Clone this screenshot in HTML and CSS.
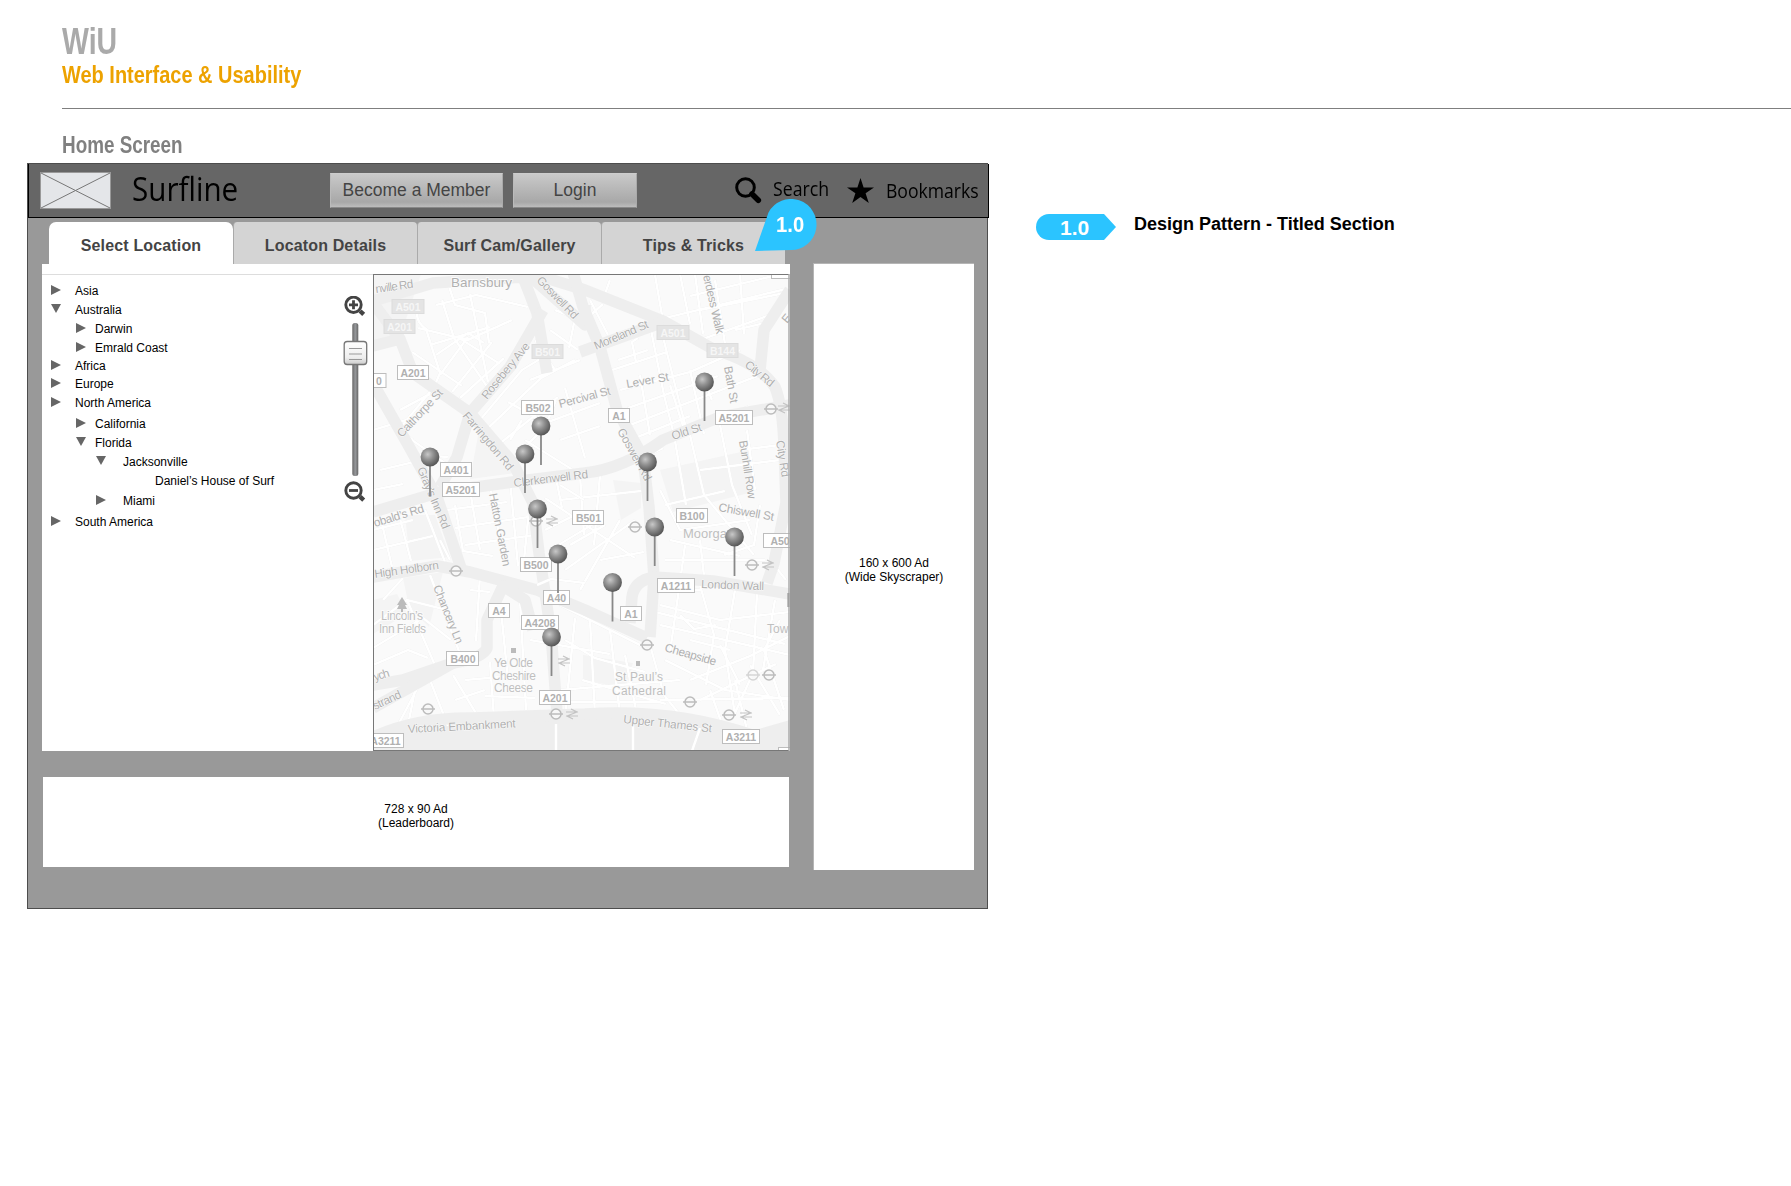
FILE: index.html
```html
<!DOCTYPE html>
<html lang="en">
<head>
<meta charset="utf-8">
<title>WiU - Home Screen</title>
<link rel="stylesheet" href="styles.css">
</head>
<body>
<header class="doc-head">
  <h1 class="doc-title"><span>WiU</span></h1>
  <p class="doc-sub"><span>Web Interface &amp; Usability</span></p>
</header>
<h2 class="screen-name"><span>Home Screen</span></h2>
<div class="board">
  <div class="frame">
    <div class="topbar">
      <svg class="logo" width="71" height="37" viewBox="0 0 71 37"><rect x=".5" y=".5" width="70" height="36" fill="#e4e6e9" stroke="#999"/><path d="M1 1 70 36M70 1 1 36" stroke="#777" stroke-width="1"/></svg>
      <span class="brand"><span>Surfline</span></span>
      <button class="btn btn-member">Become a Member</button>
      <button class="btn btn-login">Login</button>
      <svg class="ico-search" width="27" height="27" viewBox="0 0 27 27"><circle cx="10.5" cy="10.5" r="8.8" fill="none" stroke="#000" stroke-width="3"/><path d="M17 17l6.3 6.2" stroke="#000" stroke-width="5.6" stroke-linecap="round"/></svg>
      <span class="link link-search"><span>Search</span></span>
      <svg class="ico-star" width="27" height="25" viewBox="0 0 27 25"><path d="M13.5 0l3.1 9.4H27l-8.4 5.8 3.2 9.8-8.3-6.1L5.2 25l3.2-9.8L0 9.4h10.4z"/></svg>
      <span class="link link-book"><span>Bookmarks</span></span>
    </div>
    <div class="content">
      <div class="left">
        <nav class="tabs">
          <a class="tab active">Select Location</a>
          <a class="tab">Locaton Details</a>
          <a class="tab">Surf Cam/Gallery</a>
          <a class="tab">Tips &amp; Tricks</a>
        </nav>
        <section class="panel">
          <div class="locations">
            <ul class="tree">
              <li><i class="shut"></i>Asia</li>
              <li><i class="open"></i>Australia</li>
              <li class="l2"><i class="shut"></i>Darwin</li>
              <li class="l2"><i class="shut"></i>Emrald Coast</li>
              <li class="tight"><i class="shut"></i>Africa</li>
              <li><i class="shut"></i>Europe</li>
              <li class="loose"><i class="shut"></i>North America</li>
              <li class="l2"><i class="shut"></i>California</li>
              <li class="l2"><i class="open"></i>Florida</li>
              <li class="l3"><i class="open"></i>Jacksonville</li>
              <li class="l4">Daniel’s House of Surf</li>
              <li class="l3 last"><i class="shut"></i>Miami</li>
              <li><i class="shut"></i>South America</li>
            </ul>
            <svg class="zoomer" width="26" height="208" viewBox="343 296 26 208">
              <defs>
                <linearGradient id="track"><stop offset="0" stop-color="#666"/><stop offset=".5" stop-color="#96989b"/><stop offset="1" stop-color="#666"/></linearGradient>
                <linearGradient id="knob" x2="0" y2="1"><stop offset="0" stop-color="#fff"/><stop offset=".7" stop-color="#eee"/><stop offset="1" stop-color="#ccc"/></linearGradient>
              </defs>
              <g fill="none" stroke="#444">
                <circle cx="353.500" cy="304.800" r="7.700" stroke-width="2.900"/><path d="M360 311l3.700 3.400" stroke-width="4.400"/><path d="M349 304.800h9M353.500 300.300v9" stroke-width="2.800"/>
                <circle cx="353.500" cy="490.500" r="7.700" stroke-width="2.900"/><path d="M360 496.700l3.700 3.400" stroke-width="4.400"/><path d="M349 490.500h9" stroke-width="2.800"/>
              </g>
              <rect x="352.300" y="323" width="6" height="153" rx="2.500" fill="url(#track)"/>
              <rect x="344.200" y="341.500" width="22.500" height="23" rx="3" fill="url(#knob)" stroke="#777" stroke-width="1.300"/>
              <path d="M349 348.500h13M349 354h13M349 359.500h13" stroke="#999" stroke-width="1.100"/>
            </svg>
          </div>
          <svg class="map" width="417" height="477" viewBox="373 274 417 477">
            <defs>
              <radialGradient id="ball" cx=".38" cy=".36" r=".65"><stop offset="0" stop-color="#c8c8c8"/><stop offset=".45" stop-color="#929292"/><stop offset="1" stop-color="#585858"/></radialGradient>
              <g id="pin"><path d="M0 8v31" stroke="#888" stroke-width="1.800"/><circle r="9.400" fill="url(#ball)"/></g>
              <g id="tube" fill="none" stroke="#bcbcbc"><circle r="5" fill="#f8f8f8" stroke-width="1.500"/><path d="M-7 0H7" stroke-width="1.500"/></g>
              <path id="rail" d="M-6-2H6M-6 2H6M-1-5 5-2-5 2 1 5" fill="none" stroke="#c4c4c4" stroke-width="1.200"/>
            </defs>
            <rect x="373" y="274" width="417" height="477" fill="#fafafa"/>
            <g fill="#f4f4f4">
              <path d="M373 274h48l-20 60-28 8zM405 515h30l15 42-40 4zM403 578l40-6-14 55-20-20zM613 480l28 3v25l-20 12zM480 425l35 48-45 6zM373 600l24-6 10 20-34 20zM660 470l90-20 3 42-80 20zM583 655l50 8-8 25-42-8z"/>
            </g>
            <path d="M373 741q40-14 90-21l122-4q90-4 170 14l35-10v31H373z" fill="#eee"/>
            <g class="minor">
              <path d="M436 305l40-10 52 12M442 300l12 38 34 50M418 328l50 12 44-20M430 345l60-18M470 294l18 88M448 283l7 22 30 8 4 30M456 336l44 28M436 355l32-22 16 10M412 352l50 34M440 375l28-38M452 392l40-50M460 398l44-40"/>
              <path d="M420 305q-8 14 6 24l14 44-6 14-33 40M395 426l18 14M400 410l30-16M430 380l30 30M480 420l42-50 36-22M486 430l55-52 34-18M498 445l60-48M522 420l-12 20M535 340l20 30M530 380l50-20M508 402l40 22-20 20M540 425l60-22M556 400l-16 40M565 388l20 70M560 440l40-14M525 440l48 30"/>
              <path d="M555 310l20 8-6 30M550 330l28 20M590 300l18 35M610 280l-8 22M585 320l18-16M600 345l52-20M618 360l30-10M612 370l55-18M650 325l14 70 10 40 12 70M660 325l20 80 8 30M620 390l70-18 50-22M628 408l90-32M630 425l130-50M630 440l60-24M640 452l110-46M637 460l26-12M655 275l8 46M680 274l10 50M695 274l8 60M715 280l10 64M740 274l4 60M665 318l125-30M690 296l100-24M700 310l90-18M735 330l34-8M700 340l70-25M636 362l-4-20 6-4M640 375l10 60M670 385l14 44M690 370l14 64M712 400l-8-20"/>
              <path d="M373 430l40-12M380 470l34-8M373 490l30-6M412 440l40 28M418 455l30 2M455 505l8 46 30 5M470 490l10 60M490 485l12 66M510 480l8 86M530 500l-6 60M447 510l60-8M455 528l80-12M465 545l70-10M373 530l40-10M380 515l12 52M397 507l14 54M373 550l60-14M425 510l20 52M440 540l10 20"/>
              <path d="M545 530l36-18M550 550l50-30M560 500l90-10M556 478l6 30M580 475l4 60M600 475l-6 70M570 545l35-20M565 570l70-50M580 590l40-70M600 560l44-8M545 498l30 20 60 40M660 490l20 40 70-10M665 505l60-14M690 435l14 60 50 60M720 425l12 60 20 50M747 430l8 60M740 450l40-5M700 470l80-10M760 505l-6 40-30 10M670 540l70 16M665 560l100 0M685 545l-4 30M700 540l4 36M770 560l16 20"/>
              <path d="M383 600l20-22M373 625l34-25 40 10M373 648l50-30 28 22M407 600l30 70M430 575l35 92M480 575l-4 66M470 590l20 2M500 600l8 80M520 600l6 110M490 662l4 56M465 680l70-6M485 696l50 2M415 690l-6 30M430 680l18 46M453 675l30 50M398 725l20-38M455 700l30-10M373 665l35-15 20 8M530 640l80 14M560 605l90 45M575 618l-10 100M590 620l5 95M610 630l10 85M565 640l30 18 50 14M560 690l120-10M570 702l90 0M625 655l12 60M582 680l84 24"/>
              <path d="M655 590l45 0 10-12M660 605l60 15 70-8M660 625l130 30M680 582l-10 70M700 585l14 50-8 50M735 590l-10 60 10 65M757 593l-4 80-18 40M775 600l-12 70M665 660l60 30 65 10M650 645l14 50 20 25M690 680l60-24 40-20M700 700l76-36M720 645l20 40M750 665l30 50M660 700l130-2M710 690l14 40M735 680l12 50M690 640l40 10M780 620l-16 30 20 60M655 612l130 32M680 615l14 14 22-4"/>
            </g>
            <g class="major">
              <path d="M373 301l60-18 90-6 14 36 10 60"/>
              <path d="M543 310l-33 57-40 46-13 44-17 30"/>
              <path d="M512 260l73 65 0-20M520 270l65 20 78 31 50 28q46 14 62 38 8 20 9 60l2 56-12 60-7 20"/>
              <path d="M570 262l13 45 17 40 17 63 26 47 6 50 5 70-4 60"/>
              <path d="M580 352l83-30M760 370l4-40 26-40"/>
              <path d="M373 512l67-20 80-11 65-8q38-4 78-33l57-23 70-12"/>
              <path d="M373 303l27 36 13 34 57 40 43 50 20 40 6 50 12 80 6 80M373 346l27-7"/>
              <path d="M373 383l34 60 30 54 25 74"/>
              <path d="M373 577l64-11 33 6 67 18 48 20 62 28"/>
              <path d="M630 623l2-26q2-16 22-20l59 4 77 13"/>
              <path d="M373 685l30-5 50-17q30-5 34-15l0-28 16-34 22 14 8 30"/>
              <path d="M373 708l80-45"/>
              <path d="M373 737q45-20 100-19l112-4q90-6 170 22"/>
            </g>
            <path class="minor" d="M537 585l14-6 34 4M560 485l24 15M556 724v27M633 724v27M700 728l-8 23"/>
            <g class="roads">
              <text transform="translate(376 293) rotate(-8)" textLength="38">nville Rd</text>
              <text class="area" x="451" y="287" textLength="61">Barnsbury</text>
              <text transform="translate(536 281) rotate(46)" textLength="54">Goswell Rd</text>
              <text transform="translate(487 400) rotate(-51)" textLength="69">Rosebery Ave</text>
              <text transform="translate(402 438) rotate(-47)" textLength="61">Calthorpe St</text>
              <text transform="translate(462 416) rotate(50)" textLength="72">Farringdon Rd</text>
              <text transform="translate(417 469) rotate(67)" textLength="66">Gray’s Inn Rd</text>
              <text transform="translate(514 487) rotate(-7)" textLength="75">Clerkenwell Rd</text>
              <text transform="translate(560 408) rotate(-15)" textLength="53">Percival St</text>
              <text transform="translate(596 350) rotate(-23)" textLength="58">Moreland St</text>
              <text transform="translate(627 388) rotate(-10)" textLength="43">Lever St</text>
              <text transform="translate(703 276) rotate(77)" textLength="60">erdess Walk</text>
              <text transform="translate(744 366) rotate(39)" textLength="34">City Rd</text>
              <text transform="translate(724 367) rotate(80)" textLength="37">Bath St</text>
              <text transform="translate(673 440) rotate(-18)" textLength="31">Old St</text>
              <text transform="translate(617 431) rotate(61)" textLength="58">Goswell Rd</text>
              <text transform="translate(739 441) rotate(81)" textLength="59">Bunhill Row</text>
              <text transform="translate(776 441) rotate(81)" textLength="37">City Rd</text>
              <text transform="translate(375 527) rotate(-17)" textLength="52">obald’s Rd</text>
              <text transform="translate(489 494) rotate(79)" textLength="74">Hatton Garden</text>
              <text transform="translate(375 578) rotate(-8)" textLength="65">High Holborn</text>
              <text transform="translate(433 587) rotate(68)" textLength="62">Chancery Ln</text>
              <text transform="translate(375 681) rotate(-17)" textLength="16">ych</text>
              <text transform="translate(375 710) rotate(-25)" textLength="30">strand</text>
              <text transform="translate(408 733) rotate(-3)" textLength="108">Victoria Embankment</text>
              <text transform="translate(718 511) rotate(10)" textLength="56">Chiswell St</text>
              <text transform="translate(701 588) rotate(2)" textLength="63">London Wall</text>
              <text transform="translate(664 651) rotate(16)" textLength="53">Cheapside</text>
              <text transform="translate(623 723) rotate(6)" textLength="89">Upper Thames St</text>
              <text transform="translate(787 324) rotate(-50)">E</text>
            </g>
            <g class="places">
              <text class="district" x="683" y="538" textLength="44">Moorga</text>
              <text x="767" y="633">Tow</text>
              <text x="381" y="620" textLength="42">Lincoln’s</text><text x="379" y="633" textLength="47">Inn Fields</text>
              <text x="494" y="667" textLength="39">Ye Olde</text><text x="492" y="680" textLength="44">Cheshire</text><text x="494" y="692" textLength="39">Cheese</text>
              <text x="615" y="681" textLength="48">St Paul’s</text><text x="612" y="695" textLength="54">Cathedral</text>
            </g>
            <path d="M402 597l5 8h-2l2 4h-4v3h-2v-3h-4l2-4h-2zM511 648h5v5h-5zM636 661h4v5h-4z" fill="#bbb"/>
            <g class="shields faded">
              <rect x="392" y="299.500" width="32" height="14"/><text x="408" y="310.500">A501</text>
              <rect x="384" y="319.500" width="31" height="14"/><text x="399.500" y="330.500">A201</text>
              <rect x="532" y="344.500" width="31" height="14"/><text x="547.500" y="355.500">B501</text>
              <rect x="657" y="325.500" width="32" height="14"/><text x="673" y="336.500">A501</text>
              <rect x="707" y="343.500" width="31" height="14"/><text x="722.500" y="354.500">B144</text>
            </g>
            <g class="shields">
              <rect x="397.500" y="365.500" width="31" height="14"/><text x="413" y="376.500">A201</text>
              <rect x="360.500" y="373.500" width="25.500" height="14"/><text x="379" y="384.500">0</text>
              <rect x="521.500" y="400.500" width="32" height="14"/><text x="538" y="411.500">B502</text>
              <rect x="440.500" y="462.500" width="31" height="14"/><text x="456" y="473.500">A401</text>
              <rect x="442.500" y="482.500" width="37" height="14"/><text x="461" y="493.500">A5201</text>
              <rect x="608.500" y="408.500" width="21" height="14"/><text x="619" y="419.500">A1</text>
              <rect x="715.500" y="410.500" width="37" height="14"/><text x="734" y="421.500">A5201</text>
              <rect x="572.500" y="510.500" width="31" height="14"/><text x="588.500" y="521.500">B501</text>
              <rect x="520.500" y="557.500" width="31" height="14"/><text x="536" y="568.500">B500</text>
              <rect x="543.500" y="590.500" width="26" height="14"/><text x="556.500" y="601.500">A40</text>
              <rect x="488.500" y="603.500" width="21" height="14"/><text x="499" y="614.500">A4</text>
              <rect x="521.500" y="615.500" width="37" height="14"/><text x="540" y="626.500">A4208</text>
              <rect x="446.500" y="651.500" width="32" height="14"/><text x="463" y="662.500">B400</text>
              <rect x="539.500" y="690.500" width="31" height="14"/><text x="555" y="701.500">A201</text>
              <rect x="366.500" y="733.500" width="37" height="14"/><text x="385.500" y="744.500">A3211</text>
              <rect x="676.500" y="508.500" width="31" height="14"/><text x="692" y="519.500">B100</text>
              <rect x="763.500" y="533.500" width="37" height="14"/><text x="783" y="544.500">A501</text>
              <rect x="657.500" y="578.500" width="37" height="14"/><text x="676" y="590">A1211</text>
              <rect x="620.500" y="606.500" width="21" height="14"/><text x="631" y="617.500">A1</text>
              <rect x="722.500" y="729.500" width="37" height="14"/><text x="741" y="740.500">A3211</text>
              <rect x="771.500" y="265.500" width="31" height="13"/><rect x="778.500" y="747.500" width="31" height="13"/>
            </g>
            <use href="#tube" x="771" y="409"/><use href="#tube" x="456" y="571"/><use href="#tube" x="536" y="521"/><use href="#tube" x="428" y="709"/><use href="#tube" x="556" y="714"/><use href="#tube" x="635" y="527"/><use href="#tube" x="647" y="645"/><use href="#tube" x="752" y="565"/><use href="#tube" x="690" y="702"/><use href="#tube" x="729" y="715"/><use href="#tube" x="769" y="675"/><use href="#tube" x="753" y="675" opacity=".6"/>
            <use href="#rail" x="552" y="521"/><use href="#rail" x="564" y="661"/><use href="#rail" x="572" y="714"/><use href="#rail" x="768" y="565"/><use href="#rail" x="746" y="715"/><use href="#rail" x="784" y="408"/>
            <use href="#pin" x="430" y="457"/><use href="#pin" x="525" y="454"/><use href="#pin" x="541" y="426"/><use href="#pin" x="537.500" y="509"/><use href="#pin" x="558" y="554"/><use href="#pin" x="551.500" y="637"/><use href="#pin" x="704.500" y="382"/><use href="#pin" x="647.500" y="462"/><use href="#pin" x="654.700" y="527"/><use href="#pin" x="612.500" y="582.500"/><use href="#pin" x="734.500" y="537"/>
            <path d="M788.500 593v14" stroke="#888" stroke-width="2"/>
            <path d="M373 274.500h416M373.500 274v477M373 750.500h416" fill="none" stroke="#777"/><path d="M789 274v477" stroke="#aaa" stroke-width="1.500"/>
          </svg>
        </section>
        <div class="ad leaderboard"><span>728 x 90 Ad</span><span>(Leaderboard)</span></div>
      </div>
      <aside class="ad skyscraper"><span>160 x 600 Ad</span><span>(Wide Skyscraper)</span></aside>
    </div>
    <div class="callout">
      <svg width="62" height="54" viewBox="755 199 62 54"><path d="M768.500 212.500A25.500 25.500 0 1 1 791 250L755 251z" fill="#2bc4ff"/></svg>
      <span>1.0</span>
    </div>
  </div>
  <div class="legend">
    <span class="tag">1.0</span>
    <span class="note">Design Pattern - Titled Section</span>
  </div>
</div>
</body>
</html>
```
FILE: styles.css
```css
* { box-sizing: border-box; }
body { margin: 0; background: #fff; font-family: "Liberation Sans", Arial, sans-serif; overflow: hidden; }
h1, h2, p, ul { margin: 0; padding: 0; }

.doc-head { height: 109px; margin-left: 62px; padding-top: 21px; border-bottom: 1px solid #7f7f7f; }
.doc-head span, .screen-name span, .brand span, .link span { display: inline-block; transform-origin: 0 50%; white-space: nowrap; }
.doc-title { height: 41px; font-size: 37px; line-height: 41px; color: #aaa; }
.doc-title span { transform: scaleX(.77); }
.doc-sub { height: 26px; font-size: 24px; line-height: 26px; font-weight: bold; color: #eda200; }
.doc-sub span { transform: scaleX(.832); }
.screen-name { height: 54px; padding: 23px 0 0 62px; font-size: 23.500px; line-height: 27px; color: #808080; }
.screen-name span { transform: scaleX(.803); }

.board { display: flex; align-items: flex-start; padding-left: 27px; }
.frame { position: relative; width: 961px; height: 746px; background: #999; border: 1px solid #4d4d4d; }
.topbar { display: flex; align-items: flex-start; width: 961px; height: 54px; background: #666; border: solid #000; border-width: 0 1px 1px 1px; padding: 8px 0 0 11px; }
.logo { flex: none; }
.brand { width: 219px; padding-left: 21px; font: 32px/33px "Open Sans", "Noto Sans", sans-serif; color: #000; }
.brand span { transform: scaleX(.925); }
.btn { flex: none; height: 35px; margin: 1px 10px 0 0; padding: 0 0 2px; border: 1px solid #b4b4b4; border-color: #ccc #aaa #888 #bbb; background: linear-gradient(#c9c9c9, #a8a8a8 85%, #bdbdbd); font: 17.500px/30px "Liberation Sans", Arial, sans-serif; color: #444; }
.btn-member { width: 173px; }
.btn-login { width: 124px; margin-right: 98px; }
.ico-search { flex: none; margin-top: 5px; }
.link { flex: none; font: 20px/24px "Open Sans", "Noto Sans", sans-serif; color: #000; }
.link-search { width: 85px; padding: 5px 0 0 11px; }
.link-book { width: 100px; padding: 7px 0 0 12px; }
.link-search span { transform: scaleX(.885); }
.link-book span { transform: scaleX(.88); }
.ico-star { flex: none; margin-top: 6px; }

.content { display: flex; }
.left { width: 762px; padding: 4px 0 0 14px; }
.tabs { display: flex; height: 42px; padding-left: 7px; }
.tab { width: 184px; height: 42px; border-left: 1px solid #aaa; border-radius: 4px 4px 0 0; background: #d4d4d4; font-size: 16px; font-weight: bold; line-height: 47px; letter-spacing: .15px; text-align: center; color: #444; }
.tab.active { background: #fff; border-left: 0; border-radius: 7px 7px 0 0; }
.panel { display: flex; width: 748px; height: 487px; padding-top: 10px; background: #fff; }
.locations { display: flex; width: 331px; height: 476px; border-top: 1px solid #ddd; }
.tree { width: 301px; padding: 6px 0 0 9px; list-style: none; font-size: 12px; color: #000; }
.tree li { display: flex; align-items: center; height: 19px; }
.tree i { width: 24px; height: 12px; flex: none; }
.tree i::before { content: ""; display: block; }
.tree .shut::before { border: solid transparent; border-width: 5.500px 0 5.500px 10px; border-left-color: #666; width: 0; }
.tree .open::before { border: solid transparent; border-width: 9px 5px 0; border-top-color: #666; width: 0; }
.tree .l2 { padding-left: 25px; }
.tree .l2 i { width: 19px; }
.tree .l3 { padding-left: 45px; }
.tree .l3 i { width: 27px; }
.tree .l4 { padding-left: 104px; }
.tree .tight { height: 17px; }
.tree .loose { height: 19px; margin-bottom: 2px; }
.tree .last { margin: 1px 0 2px; }
.zoomer { margin-top: 21px; }

.map { flex: none; display: block; font-family: "Liberation Sans", Arial, sans-serif; }
.minor { fill: none; stroke: #fff; stroke-width: 2.600px; stroke-linejoin: round; filter: drop-shadow(0 0 .6px #e2e2e2); }
.major { fill: none; stroke: #eee; stroke-width: 11.500px; stroke-linejoin: round; }
.roads text, .places text { fill: #b6b6b6; stroke: #fbfbfb; stroke-width: 2px; paint-order: stroke; stroke-linejoin: round; }
.roads text { font-size: 11.800px; stroke-width: 1px; fill: #b0b0b0; }
.roads .area { font-size: 13.500px; stroke-width: 2px; }
.places text { font-size: 12px; fill: #bfbfbf; }
.places .district { font-size: 13px; }
.shields rect { fill: #fff; stroke: #bdbdbd; stroke-width: 1px; }
.shields text { fill: #b0b0b0; font-size: 10.500px; font-weight: bold; text-anchor: middle; }
.faded rect { fill: #e4e4e4; stroke: #dcdcdc; }
.faded text { fill: #f6f6f6; }

.ad { display: flex; flex-direction: column; align-items: center; background: #fff; font-size: 12px; line-height: 14px; color: #000; }
.leaderboard { width: 746px; height: 90px; margin: 26px 0 0 1px; padding-top: 25px; }
.skyscraper { width: 161px; height: 607px; margin: 45px 0 0 23px; padding-top: 292px; border: solid #b5b5b5; border-width: 1px 0 0 1px; }

.callout { position: absolute; left: 727px; top: 35px; width: 62px; height: 54px; }
.callout span { position: absolute; left: 21px; top: 13px; font-size: 22px; line-height: 25px; font-weight: bold; color: #fff; transform: scaleX(.92); transform-origin: 0 0; }
.legend { display: flex; align-items: flex-start; padding: 51px 0 0 48px; }
.tag { width: 80px; height: 26px; padding-left: 24px; background: #2bc4ff; border-radius: 13px 0 0 13px; clip-path: polygon(0 0, 68px 0, 80px 50%, 68px 100%, 0 100%); font-size: 21px; line-height: 27px; font-weight: bold; color: #fff; }
.note { margin-left: 18px; font-size: 18px; line-height: 20px; font-weight: bold; color: #000; white-space: nowrap; }
```
